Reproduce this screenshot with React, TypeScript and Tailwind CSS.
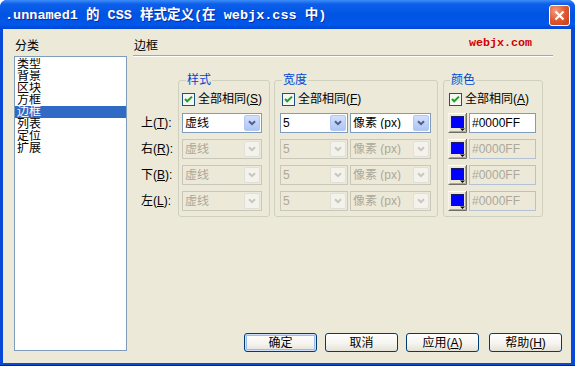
import React from 'react';

type ComboProps = { w: string; text: string; disabled?: boolean };

const DropBtn: React.FC<{ disabled?: boolean }> = ({ disabled }) => (
  <div
    className={`w-[16px] h-[16px] mr-[1px] rounded-[2px] flex items-center justify-center ${
      disabled
        ? 'bg-[#F3F2EC] border border-[#E2E0D6]'
        : 'bg-[linear-gradient(180deg,#D3E0FD_0%,#BCCFF9_60%,#AFC5F6_100%)] border border-[#B4C7F2]'
    }`}
  >
    <svg width="8" height="6" viewBox="0 0 8 6">
      <path d="M1 1.2 L4 4.2 L7 1.2" fill="none" stroke={disabled ? '#C9C7BA' : '#4D6185'} strokeWidth="2" />
    </svg>
  </div>
);

const Combo: React.FC<ComboProps> = ({ w, text, disabled }) => (
  <div
    className={`${w} h-[20px] flex items-center border ${
      disabled ? 'border-[#C9C7BA] bg-[#ECE9D8] text-[#ACA899]' : 'border-[#7F9DB9] bg-white text-black'
    }`}
  >
    <span className="flex-1 pl-[2px] leading-[12px] whitespace-nowrap overflow-hidden">{text}</span>
    <DropBtn disabled={disabled} />
  </div>
);

const CheckBox: React.FC = () => (
  <svg width="13" height="13" viewBox="0 0 13 13">
    <rect x="0.5" y="0.5" width="12" height="12" fill="#F6F6F3" stroke="#1C5180" />
    <path d="M3 6 L5.2 8.3 L10 3.6" fill="none" stroke="#21A121" strokeWidth="2" />
  </svg>
);

const Check: React.FC<{ label: string; hot: string; className?: string }> = ({ label, hot, className }) => (
  <div className={`h-[13px] flex items-center ${className ?? ''}`}>
    <CheckBox />
    <span className="ml-[3px] leading-[13px] whitespace-nowrap">
      {label}(<u>{hot}</u>)
    </span>
  </div>
);

// colour picker button: raised box, blue chip, little arrow
const Swatch: React.FC = () => (
  <svg width="19" height="20" viewBox="0 0 19 20">
    <rect x="0" y="0" width="19" height="20" fill="#ECE9D8" />
    <path d="M0 19.5 V0.5 H18.5" fill="none" stroke="#FFFFFF" />
    <path d="M0.5 19.5 H18.5 V0" fill="none" stroke="#716F64" />
    <path d="M1.5 18.5 H17.5 V1" fill="none" stroke="#ACA899" />
    <rect x="3" y="3" width="13" height="12" fill="#0000FF" />
    <path d="M3 3.5 H16 M3.5 3 V15" stroke="#1A1A60" strokeWidth="1" />
    <path d="M12 15.5 H17 L14.5 18 Z" fill="#000" />
  </svg>
);

const ColorInput: React.FC<{ disabled?: boolean }> = ({ disabled }) => (
  <div
    className={`w-[67px] h-[20px] flex items-center pl-[2px] border leading-[12px] ${
      disabled ? 'border-[#B5C2D4] bg-[#ECE9D8] text-[#ACA899]' : 'border-[#7F9DB9] bg-white text-black'
    }`}
  >
    #0000FF
  </div>
);

const Btn: React.FC<{ children: React.ReactNode; def?: boolean; className?: string }> = ({ children, def, className }) => (
  <div
    className={`w-[73px] h-[19px] flex items-center justify-center rounded-[3px] border border-[#003C74] bg-[linear-gradient(180deg,#FFFFFF_0%,#F5F4EF_55%,#E4E1D7_100%)] leading-[12px] whitespace-nowrap ${
      def ? 'shadow-[inset_0_0_0_1px_#CEE0FB,inset_0_0_0_2px_#9DB9EE]' : ''
    } ${className ?? ''}`}
  >
    {children}
  </div>
);

const categories = ['类型', '背景', '区块', '方框', '边框', '列表', '定位', '扩展'];
const sides = [
  { t: '上', k: 'T' },
  { t: '右', k: 'R' },
  { t: '下', k: 'B' },
  { t: '左', k: 'L' },
];

export default function App() {
  return (
    <div className="w-[575px] h-[366px] bg-white font-['Liberation_Sans','Noto_Sans_CJK_SC',sans-serif] text-[12px] text-black select-none">
      <div className="w-full h-full flex flex-col rounded-t-[7px] overflow-hidden bg-[#0A48D8] border-b border-[#00219A]">
        {/* Title bar */}
        <div className="h-[29px] shrink-0 flex items-start pl-[5px] pr-[5px] bg-[linear-gradient(180deg,#3C8CF8_0%,#0D5FEA_14%,#0054E3_50%,#0057E9_85%,#0046D4_100%)]">
          <span className="flex-1 mt-[9px] leading-[14px] font-['Liberation_Mono','Noto_Sans_CJK_SC',monospace] font-bold text-[13.5px] text-white [text-shadow:1px_1px_0_#0F2A9C] whitespace-pre">
            .unnamed1 的 CSS 样式定义(在 webjx.css 中)
          </span>
          <div className="mt-[5px] w-[21px] h-[21px] rounded-[3px] border border-white bg-[radial-gradient(circle_at_30%_25%,#F39A7B_0%,#DE5A34_50%,#C53C14_100%)] flex items-center justify-center">
            <svg width="11" height="11" viewBox="0 0 11 11">
              <path d="M1.5 1.5 L9.5 9.5 M9.5 1.5 L1.5 9.5" stroke="#FFFFFF" strokeWidth="2.2" />
            </svg>
          </div>
        </div>

        {/* Body */}
        <div className="flex-1 min-h-0 ml-[3px] mr-[4px] mb-[2px] bg-[#ECE9D8] flex">
          {/* Category list */}
          <div className="w-[113px] ml-[11px] pt-[11px] pb-[12px] flex flex-col">
            <div className="h-[16px] pl-[1px] leading-[12px]">分类</div>
            <div className="flex-1 border border-[#7F9DB9] bg-white pt-[1px]">
              {categories.map((c) => (
                <div
                  key={c}
                  className={`h-[12px] pl-[2px] overflow-hidden ${c === '边框' ? 'bg-[#316AC5] text-white' : ''}`}
                >
                  <div className="h-[12px] leading-[12px] overflow-hidden">{c}</div>
                </div>
              ))}
            </div>
          </div>

          {/* Right panel */}
          <div className="w-[429px] ml-[6px] pt-[11px] pb-[11px] flex flex-col">
            <div className="h-[15px] flex items-start justify-between pl-[1px] pr-[30px]">
              <span className="leading-[12px]">边框</span>
              <span className="-mt-[3px] font-['Liberation_Mono',monospace] font-bold text-[11.7px] leading-[12px] text-[#D40000]">
                webjx.com
              </span>
            </div>
            <div className="mr-[9px] h-[2px] border-t border-b border-[#ACA899] border-b-white" />

            <div className="mt-[17px] h-[143px] flex">
              {/* side labels */}
              <div className="ml-[8px] w-[37px] pt-[39px] flex flex-col gap-[6px]">
                {sides.map((s) => (
                  <div key={s.k} className="h-[20px] flex items-center leading-[12px] whitespace-nowrap">
                    {s.t}(<u>{s.k}</u>):
                  </div>
                ))}
              </div>

              {/* 样式 */}
              <fieldset className="w-[92px] h-[143px] border border-[#D0D0BF] rounded-[3px] px-[3px]">
                <legend className="ml-[4px] px-[1px] leading-[12px] text-[#0046D5]">样式</legend>
                <div className="pt-[7px] flex flex-col">
                  <Check label="全部相同" hot="S" />
                  <div className="mt-[7px] flex flex-col gap-[6px]">
                    <Combo w="w-[80px]" text="虚线" />
                    <Combo w="w-[80px]" text="虚线" disabled />
                    <Combo w="w-[80px]" text="虚线" disabled />
                    <Combo w="w-[80px]" text="虚线" disabled />
                  </div>
                </div>
              </fieldset>

              {/* 宽度 */}
              <fieldset className="ml-[4px] w-[164px] h-[143px] border border-[#D0D0BF] rounded-[3px] px-[5px]">
                <legend className="ml-[2px] px-[1px] leading-[12px] text-[#0046D5]">宽度</legend>
                <div className="pt-[7px] flex flex-col">
                  <Check label="全部相同" hot="F" className="ml-[2px]" />
                  <div className="mt-[7px] flex flex-col gap-[6px]">
                    {[false, true, true, true].map((d, i) => (
                      <div key={i} className="flex gap-[2px]">
                        <Combo w="w-[68px]" text="5" disabled={d} />
                        <Combo w="w-[81px]" text="像素 (px)" disabled={d} />
                      </div>
                    ))}
                  </div>
                </div>
              </fieldset>

              {/* 颜色 */}
              <fieldset className="ml-[5px] w-[100px] h-[143px] border border-[#D0D0BF] rounded-[3px] px-[4px]">
                <legend className="ml-[2px] px-[1px] leading-[12px] text-[#0046D5]">颜色</legend>
                <div className="pt-[7px] flex flex-col">
                  <Check label="全部相同" hot="A" className="ml-[1px]" />
                  <div className="mt-[7px] flex flex-col gap-[6px]">
                    {[false, true, true, true].map((d, i) => (
                      <div key={i} className="flex gap-[2px]">
                        <Swatch />
                        <ColorInput disabled={d} />
                      </div>
                    ))}
                  </div>
                </div>
              </fieldset>
            </div>

            <div className="flex-1" />

            <div className="h-[19px] flex">
              <Btn def className="ml-[111px]">确定</Btn>
              <Btn className="ml-[8px]">取消</Btn>
              <Btn className="ml-[8px]">
                应用(<u>A</u>)
              </Btn>
              <Btn className="ml-[10px]">
                帮助(<u>H</u>)
              </Btn>
            </div>
          </div>
        </div>
      </div>
    </div>
  );
}
